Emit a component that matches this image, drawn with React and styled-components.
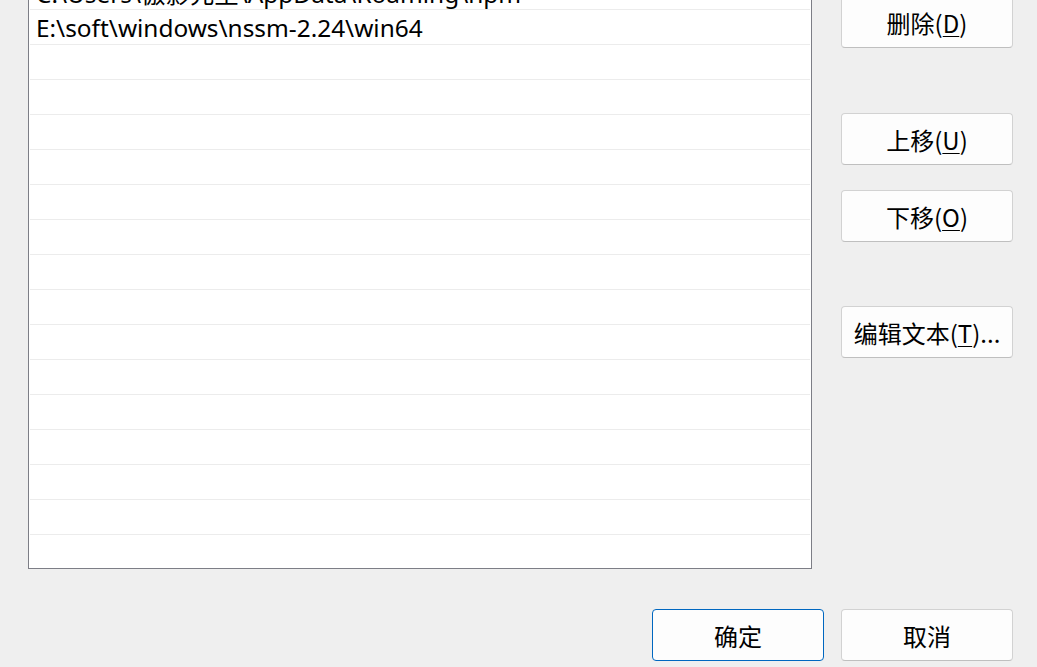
import React from "react";
import styled, { createGlobalStyle } from "styled-components";

const Global = createGlobalStyle`
  html, body { margin: 0; padding: 0; background: #efefef; }
  body { font-family: "Noto Sans", "Noto Sans CJK SC", sans-serif; }
`;

const Window = styled.div`
  width: 1037px;
  height: 667px;
  overflow: hidden;
  background: #efefef;
  display: flex;
  flex-direction: column;
  box-sizing: border-box;
  padding: 0 24px 0 28px;
`;

const TopArea = styled.div`
  display: flex;
  align-items: flex-start;
  gap: 29px;
`;

const ListBox = styled.div`
  width: 784px;
  height: 596px;
  margin-top: -27px;
  box-sizing: border-box;
  border: 1px solid #7d7e86;
  background: #ffffff;
  padding: 1px;
  overflow: hidden;
  flex-shrink: 0;
`;

const Row = styled.div`
  height: 35px;
  box-sizing: border-box;
  border-bottom: 1px solid #ececec;
  display: flex;
  align-items: center;
  padding-left: 6px;
  font-size: 24.4px;
  color: #000;
  white-space: nowrap;
`;

const SideColumn = styled.div`
  display: flex;
  flex-direction: column;
  margin-top: -4px;
`;

const Button = styled.button`
  width: 172px;
  height: 52px;
  margin-top: ${(p) => p.$gap || 0}px;
  box-sizing: border-box;
  border: 1px solid ${(p) => (p.$primary ? "#0067c0" : "#d2d2d2")};
  border-bottom-color: ${(p) => (p.$primary ? "#0067c0" : "#bfbfbf")};
  border-radius: 4px;
  background: #fdfdfd;
  font-family: "Noto Sans CJK SC", "Noto Sans", sans-serif;
  font-size: 24px;
  color: #000;
  padding: 0;
  display: flex;
  align-items: center;
  justify-content: center;
  cursor: default;
`;

const Key = styled.span`
  text-decoration: underline;
  text-underline-offset: 3px;
  text-decoration-thickness: 1px;
`;

const Footer = styled.div`
  display: flex;
  justify-content: flex-end;
  gap: 17px;
  margin-top: 40px;
`;

const rows = [
  "C:\\Users\\傲影先生\\AppData\\Roaming\\npm",
  "E:\\soft\\windows\\nssm-2.24\\win64",
];

export default function App() {
  const all = [...rows];
  while (all.length < 17) all.push("");
  return (
    <>
      <Global />
      <Window>
        <TopArea>
          <ListBox>
            {all.map((r, i) => (
              <Row key={i}>{r}</Row>
            ))}
          </ListBox>
          <SideColumn>
            <Button>
              删除(<Key>D</Key>)
            </Button>
            <Button $gap={65}>
              上移(<Key>U</Key>)
            </Button>
            <Button $gap={25}>
              下移(<Key>O</Key>)
            </Button>
            <Button $gap={64}>
              编辑文本(<Key>T</Key>)...
            </Button>
          </SideColumn>
        </TopArea>
        <Footer>
          <Button $primary>确定</Button>
          <Button>取消</Button>
        </Footer>
      </Window>
    </>
  );
}
